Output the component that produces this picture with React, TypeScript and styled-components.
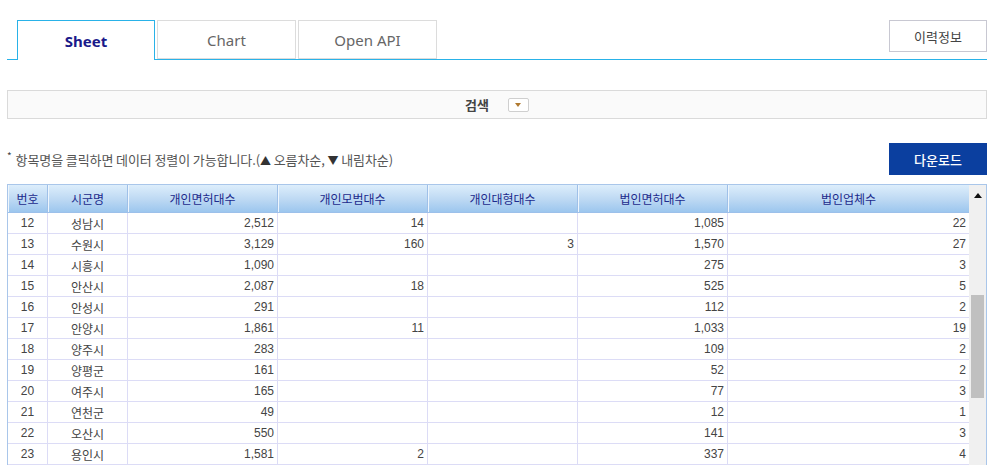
import React from 'react'
import styled, { createGlobalStyle } from 'styled-components'

const GlobalStyle = createGlobalStyle`
  html, body {
    margin: 0;
    padding: 0;
    background: #ffffff;
    overflow: hidden;
  }
  body {
    font-family: "Noto Sans", "Noto Sans CJK KR", sans-serif;
    color: #333;
  }
`

const Page = styled.div`
  width: 980px;
  padding: 20px 0 0 7px;
`

const TabBar = styled.div`
  display: flex;
  align-items: flex-start;
  justify-content: space-between;
  height: 39px;
  border-bottom: 1px solid #29b2e8;
  padding-left: 10px;
`

const Tabs = styled.div`
  display: flex;
  gap: 2px;
`

const Tab = styled.div<{ active?: boolean }>`
  box-sizing: border-box;
  width: ${({ active }) => (active ? '138px' : '139px')};
  height: ${({ active }) => (active ? '40px' : '39px')};
  display: flex;
  align-items: center;
  justify-content: center;
  background: #fff;
  font-size: 15px;
  border: 1px solid ${({ active }) => (active ? '#29b2e8' : '#dcdcdc')};
  border-bottom: ${({ active }) => (active ? 'none' : '1px solid #dcdcdc')};
  color: ${({ active }) => (active ? '#1a1a8a' : '#666')};
  font-weight: ${({ active }) => (active ? 700 : 400)};
  padding-top: 1px;
`

const HistoryButton = styled.div`
  box-sizing: border-box;
  width: 98px;
  height: 32px;
  border: 1px solid #c8c8d2;
  display: flex;
  align-items: center;
  justify-content: center;
  font-size: 13px;
  color: #444;
  font-family: "Noto Sans CJK KR", sans-serif;
`

const SearchBar = styled.div`
  box-sizing: border-box;
  margin-top: 30px;
  height: 29px;
  background: #fafafa;
  border: 1px solid #dadada;
  display: flex;
  align-items: center;
  justify-content: center;
  gap: 19px;
`

const SearchLabel = styled.span`
  font-family: "Noto Sans CJK KR", sans-serif;
  font-size: 13px;
  font-weight: 700;
  color: #444;
`

const DropToggle = styled.span`
  box-sizing: border-box;
  width: 21px;
  height: 14px;
  border: 1px solid #cfcfcf;
  border-radius: 2px;
  background: #fff;
  display: flex;
  align-items: center;
  justify-content: center;
  &::after {
    content: '';
    border-left: 3px solid transparent;
    border-right: 3px solid transparent;
    border-top: 4px solid #b07a30;
  }
`

const NoteRow = styled.div`
  display: flex;
  align-items: center;
  justify-content: space-between;
  margin-top: 24px;
`

const Note = styled.div`
  font-family: "Noto Sans CJK KR", sans-serif;
  font-size: 13px;
  color: #555;
  letter-spacing: -0.1px;
  sup {
    font-size: 10px;
    margin-right: 4px;
    color: #444;
  }
  b {
    font-weight: 400;
    font-size: 11px;
    color: #333;
  }
`

const DownloadButton = styled.div`
  width: 98px;
  height: 32px;
  background: #0b3f9f;
  color: #fff;
  font-family: "Noto Sans CJK KR", sans-serif;
  font-size: 13px;
  font-weight: 500;
  display: flex;
  align-items: center;
  justify-content: center;
`

const Grid = styled.div`
  box-sizing: border-box;
  margin-top: 9px;
  border: 1px solid #a9c6ea;
  border-bottom: none;
  display: flex;
  height: 282px;
  overflow: hidden;
  font-family: "Liberation Sans", "Noto Sans CJK KR", sans-serif;
  font-size: 12px;
`

const GridMain = styled.div`
  flex: 1;
`

const cols = '40px 80px 150px 150px 150px 150px 1fr'

const HeadRow = styled.div`
  display: grid;
  grid-template-columns: ${cols};
  height: 27px;
  background: linear-gradient(#ddeefb, #bcd8f3 55%, #9cc6ee);
  border-bottom: 1px solid #9cc0ea;
`

const HeadCell = styled.div`
  display: flex;
  align-items: center;
  justify-content: center;
  color: #1c2a8c;
  font-family: "Noto Sans CJK KR", sans-serif;
  font-size: 12px;
  border-right: 1px solid #9fc0e8;
  box-shadow: inset 1px 0 0 #eef6fd;
  &:last-child {
    border-right: none;
  }
`

const Row = styled.div`
  display: grid;
  grid-template-columns: ${cols};
  height: 21px;
`

const Cell = styled.div<{ align?: 'center' | 'right' }>`
  box-sizing: border-box;
  display: flex;
  align-items: center;
  justify-content: ${({ align }) => (align === 'center' ? 'center' : 'flex-end')};
  padding-right: ${({ align }) => (align === 'center' ? '0' : '3px')};
  border-right: 1px solid #dcdcf6;
  border-bottom: 1px solid #dcdcf6;
  color: #444;
  &:last-child {
    border-right: none;
  }
`

const NameText = styled.span`
  font-family: "Noto Sans CJK KR", sans-serif;
  font-size: 12px;
  color: #444;
`

const ScrollTrack = styled.div`
  position: relative;
  width: 17px;
  background: #f0f0f0;
`

const ScrollArrow = styled.div`
  margin: 8px auto 0;
  width: 0;
  height: 0;
  border-left: 4px solid transparent;
  border-right: 4px solid transparent;
  border-bottom: 5px solid #111;
`

const ScrollThumb = styled.div`
  position: absolute;
  left: 2px;
  right: 2px;
  top: 110px;
  height: 103px;
  background: #c0c0c0;
`

const headers = ['번호', '시군명', '개인면허대수', '개인모범대수', '개인대형대수', '법인면허대수', '법인업체수']

const rows: string[][] = [
  ['12', '성남시', '2,512', '14', '', '1,085', '22'],
  ['13', '수원시', '3,129', '160', '3', '1,570', '27'],
  ['14', '시흥시', '1,090', '', '', '275', '3'],
  ['15', '안산시', '2,087', '18', '', '525', '5'],
  ['16', '안성시', '291', '', '', '112', '2'],
  ['17', '안양시', '1,861', '11', '', '1,033', '19'],
  ['18', '양주시', '283', '', '', '109', '2'],
  ['19', '양평군', '161', '', '', '52', '2'],
  ['20', '여주시', '165', '', '', '77', '3'],
  ['21', '연천군', '49', '', '', '12', '1'],
  ['22', '오산시', '550', '', '', '141', '3'],
  ['23', '용인시', '1,581', '2', '', '337', '4'],
]

export default function App() {
  return (
    <>
      <GlobalStyle />
      <Page>
        <TabBar>
          <Tabs>
            <Tab active>Sheet</Tab>
            <Tab>Chart</Tab>
            <Tab>Open API</Tab>
          </Tabs>
          <HistoryButton>이력정보</HistoryButton>
        </TabBar>

        <SearchBar>
          <SearchLabel>검색</SearchLabel>
          <DropToggle />
        </SearchBar>

        <NoteRow>
          <Note>
            <sup>*</sup>항목명을 클릭하면 데이터 정렬이 가능합니다.(<b>▲</b> 오름차순, <b>▼</b> 내림차순)
          </Note>
          <DownloadButton>다운로드</DownloadButton>
        </NoteRow>

        <Grid>
          <GridMain>
            <HeadRow>
              {headers.map((h) => (
                <HeadCell key={h}>{h}</HeadCell>
              ))}
            </HeadRow>
            {rows.map((r) => (
              <Row key={r[0]}>
                <Cell align="center">{r[0]}</Cell>
                <Cell align="center">
                  <NameText>{r[1]}</NameText>
                </Cell>
                {r.slice(2).map((v, i) => (
                  <Cell key={i}>{v}</Cell>
                ))}
              </Row>
            ))}
          </GridMain>
          <ScrollTrack>
            <ScrollArrow />
            <ScrollThumb />
          </ScrollTrack>
        </Grid>
      </Page>
    </>
  )
}
